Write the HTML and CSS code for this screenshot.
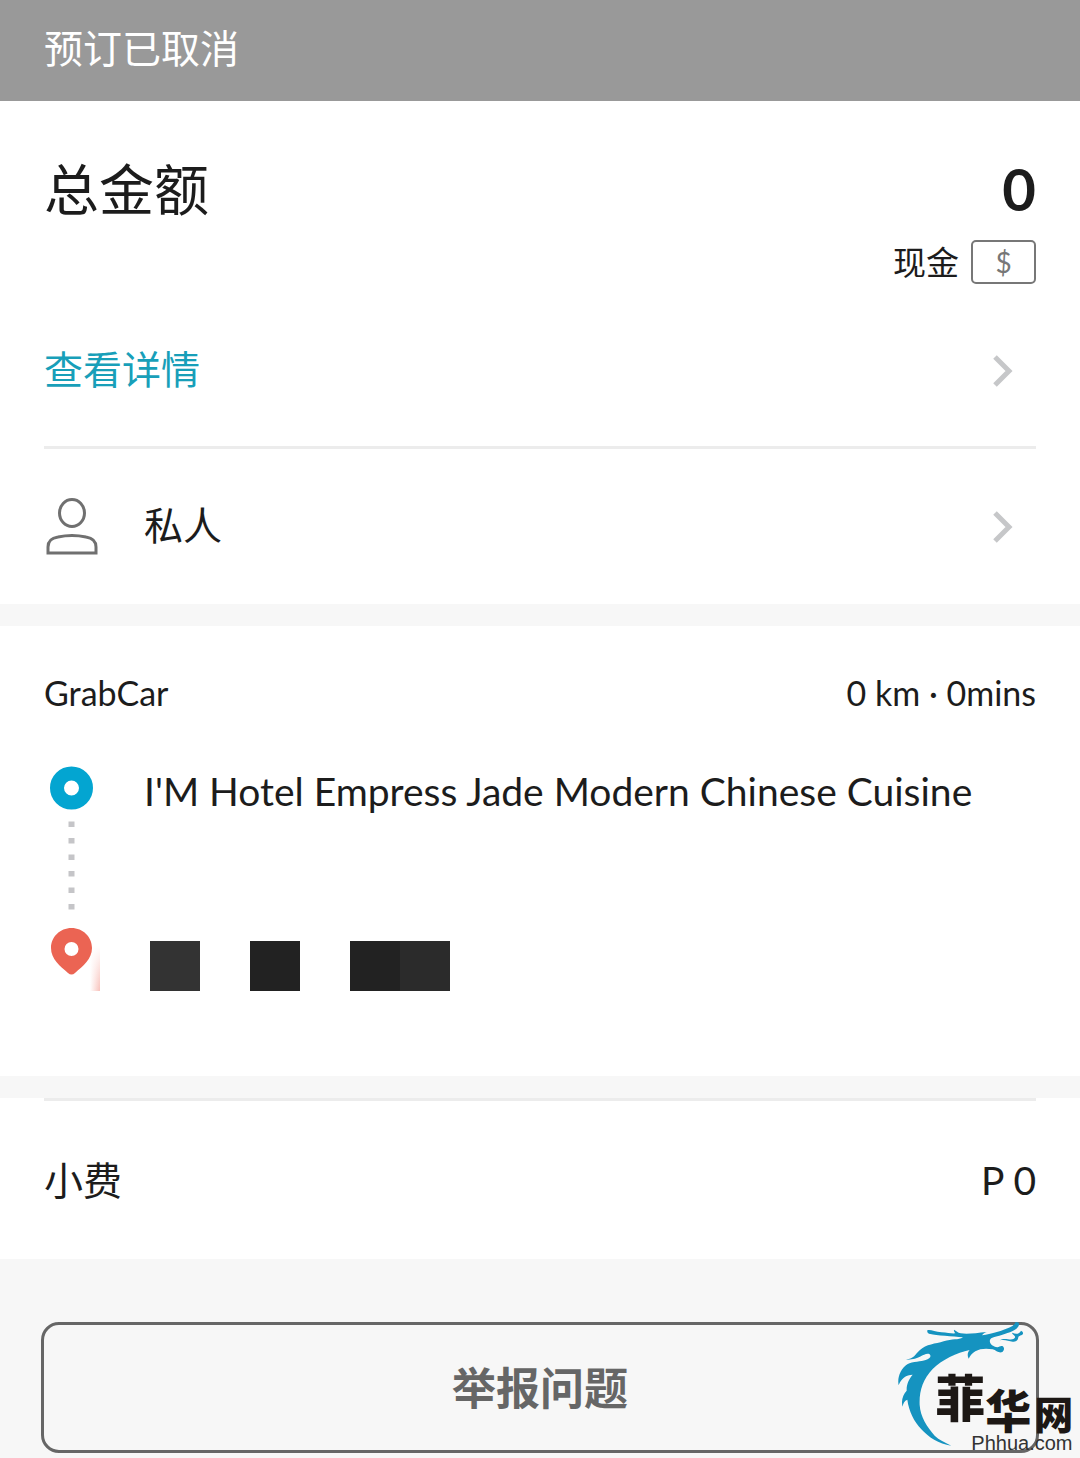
FILE: index.html
```html
<!DOCTYPE html>
<html lang="zh-CN">
<head>
<meta charset="UTF-8">
<meta name="viewport" content="width=device-width, initial-scale=1.0">
<title>预订已取消</title>
<link rel="stylesheet" href="styles.css">
</head>
<body>
<header class="status-bar">预订已取消</header>

<main>
    <section class="card payment">
        <div class="total">
            <h1>总金额</h1>
            <strong class="total-amount">0</strong>
        </div>
        <div class="method">
            <span>现金</span>
            <span class="cash-icon">$</span>
        </div>
        <a class="row details" href="#">
            <span>查看详情</span>
            <svg class="chevron" viewBox="0 0 20 32" aria-hidden="true"><path d="M2 2L16 16L2 30"/></svg>
        </a>
        <a class="row profile" href="#">
            <svg class="person" viewBox="0 0 55 58" aria-hidden="true">
                <ellipse cx="28" cy="15" rx="12.5" ry="13.5"/>
                <path d="M4 55V49C4 42 8 40 14 39Q28 36 42 39C48 40 52 43 52 49V55Z"/>
            </svg>
            <span>私人</span>
            <svg class="chevron" viewBox="0 0 20 32" aria-hidden="true"><path d="M2 2L16 16L2 30"/></svg>
        </a>
    </section>

    <section class="card trip">
        <div class="trip-head">
            <span>GrabCar</span>
            <span>0 km · 0mins</span>
        </div>
        <div class="route">
            <svg class="track" viewBox="0 0 56 225" aria-hidden="true">
                <defs>
                    <linearGradient id="fade">
                        <stop offset="0" stop-color="#ee6352" stop-opacity="0"/>
                        <stop offset="1" stop-color="#ee6352" stop-opacity=".4"/>
                    </linearGradient>
                    <linearGradient id="fadeDown" x2="0" y2="1">
                        <stop offset="0" stop-color="#fff"/>
                        <stop offset="1" stop-color="#fff" stop-opacity="0"/>
                    </linearGradient>
                </defs>
                <rect x="46" y="180" width="10" height="45" fill="url(#fade)"/>
                <rect x="46" y="180" width="10" height="45" fill="url(#fadeDown)"/>
                <circle cx="27.5" cy="22" r="14.5" fill="none" stroke="#03a5d1" stroke-width="14"/>
                <path d="M27.500 55.500V144" fill="none" stroke="#c5c5c8" stroke-width="6" stroke-dasharray="5.500 11"/>
                <path fill="#eb6453" fill-rule="evenodd" d="M27.500 162C16 162 7 171 7 182C7 193 16 200 24 207Q27.500 210 31 207C39 200 48 193 48 182C48 171 39 162 27.500 162ZM27.500 176a7 7 0 1 1 0 14a7 7 0 1 1 0-14Z"/>
            </svg>
            <div class="stops">
                <div class="pickup">I'M Hotel Empress Jade Modern Chinese Cuisine</div>
                <div class="masked">
                    <i class="block"></i>
                    <i class="block dark"></i>
                    <span class="pair"><i class="block dark"></i><i class="block mid"></i></span>
                </div>
            </div>
        </div>
    </section>

    <section class="card tip">
        <div class="row">
            <span>小费</span>
            <span>P 0</span>
        </div>
    </section>
</main>

<footer class="actions">
    <button class="report" type="button">举报问题</button>
    <svg class="site-logo" viewBox="0 0 600 474" role="img" aria-label="菲华网 Phhua.com">
        <g fill="#1593c0">
            <path d="M142 91C152 88 164 96 185 97C202 98 215 101 226 100C223 97 221 93 222 89C229 92 233 98 242 100C265 103 288 99 320 96C315 98 309 101 306 106C337 101 356 95 377 87C394 81 404 75 407 66Q418 66 417 74C414 88 396 95 365 105C345 111 333 111 330 120C327 131 338 139 352 142C358 140 361 137 367 138C375 142 373 153 365 157C354 159 348 151 338 148C317 145 300 146 286 154C275 161 270 168 266 176C261 166 263 157 269 150C231 158 185 180 158 207C128 238 117 275 119 315C121 350 141 381 164 407C178 420 193 426 214 437C176 433 145 411 124 388C102 364 87 335 82 299C73 302 69 310 68 320C62 301 70 283 80 272C79 253 87 237 98 224C78 225 64 234 56 256C51 233 62 206 82 193C99 184 124 185 137 180C149 177 156 169 148 162C129 158 119 181 78 179C104 175 103 165 119 151C139 132 166 132 191 124C217 116 235 121 249 112C219 109 167 106 151 102Q140 100 142 91Z"/>
            <path d="M359 121C374 111 389 122 400 117C407 114 407 109 401 105Q395 101 397 98C407 104 419 102 423 92Q430 94 429 101C426 107 416 106 415 112C414 122 407 126 398 125C385 123 374 117 359 121Z"/>
        </g>
        <g class="logo-name">
            <text x="166" y="350" font-size="150">菲</text>
            <text x="316" y="384" font-size="138">华</text>
            <text x="463" y="387" font-size="117">网</text>
        </g>
        <text class="logo-url" x="274" y="451" font-size="60">Phhua.com</text>
    </svg>
</footer>
</body>
</html>
```
FILE: styles.css
```css
* {
    box-sizing: border-box;
}
body {
    margin: 0;
    background: #f7f7f7;
    color: #1c1c1c;
    font-family: Lato, "Noto Sans CJK SC", sans-serif;
    font-size: 39px;
    line-height: 50px;
}
.status-bar {
    padding: 23px 44px 28px;
    background: #999;
    color: #fff;
}
.card {
    background: #fff;
    margin-bottom: 22px;
    padding: 0 44px;
}
.payment {
    padding-top: 48px;
}
.total {
    display: flex;
    justify-content: space-between;
    align-items: center;
    height: 80px;
}
h1 {
    margin: 0;
    font-size: 55px;
    font-weight: 400;
}
.total-amount {
    font-size: 58px;
}
.method {
    display: flex;
    justify-content: flex-end;
    align-items: center;
    gap: 12px;
    height: 66px;
    font-size: 33px;
}
.cash-icon {
    width: 65px;
    height: 44px;
    border: 2px solid #777;
    border-radius: 5px;
    color: #777;
    font-size: 28px;
    line-height: 40px;
    text-align: center;
}
.row {
    display: flex;
    align-items: center;
    justify-content: space-between;
    min-height: 155px;
    color: inherit;
    text-decoration: none;
}
a.row span {
    padding-bottom: 4px;
}
.row.details {
    min-height: 154px;
    border-bottom: 3px solid #ececec;
    color: #189fb9;
}
.chevron {
    width: 20px;
    height: 32px;
    margin-left: auto;
    margin-right: 23px;
    fill: none;
    stroke: #c6c7c9;
    stroke-width: 5;
}
.person {
    width: 55px;
    height: 58px;
    margin-right: 45px;
    fill: none;
    stroke: #707070;
    stroke-width: 3;
}

/* Trip */
.trip {
    padding-top: 42px;
    padding-bottom: 85px;
}
.trip-head {
    display: flex;
    justify-content: space-between;
    font-size: 34px;
}
.route {
    display: flex;
    gap: 44px;
    margin-top: 48px;
}
.track {
    flex: none;
    width: 56px;
    height: 225px;
}
.stops {
    display: flex;
    flex-direction: column;
    justify-content: space-between;
}
.masked {
    display: flex;
    gap: 50px;
    padding-left: 6px;
}
.pair {
    display: flex;
}
.block {
    width: 50px;
    height: 50px;
    background: #333;
}
.block.dark {
    background: #222;
}
.block.mid {
    background: #2b2b2b;
}

.tip {
    margin-bottom: 0;
}
.tip .row {
    min-height: 161px;
    border-top: 3px solid #ececec;
}

/* Report button with the site logo over its corner */
.actions {
    position: relative;
    padding: 63px 41px 5px;
}
.report {
    display: block;
    width: 100%;
    height: 131px;
    padding: 0 0 4px;
    border: 3px solid #666;
    border-radius: 18px;
    background: #f7f7f7;
    color: #666;
    font-family: inherit;
    font-size: 44px;
    font-weight: 700;
}
.site-logo {
    position: absolute;
    right: 0;
    bottom: 0;
    width: 200px;
    height: 158px;
    pointer-events: none;
}
.logo-name {
    fill: #1d1815;
    font-family: "Noto Sans CJK SC", sans-serif;
    font-weight: 900;
}
.logo-url {
    fill: #333;
    font-family: "Liberation Sans", sans-serif;
}
```
